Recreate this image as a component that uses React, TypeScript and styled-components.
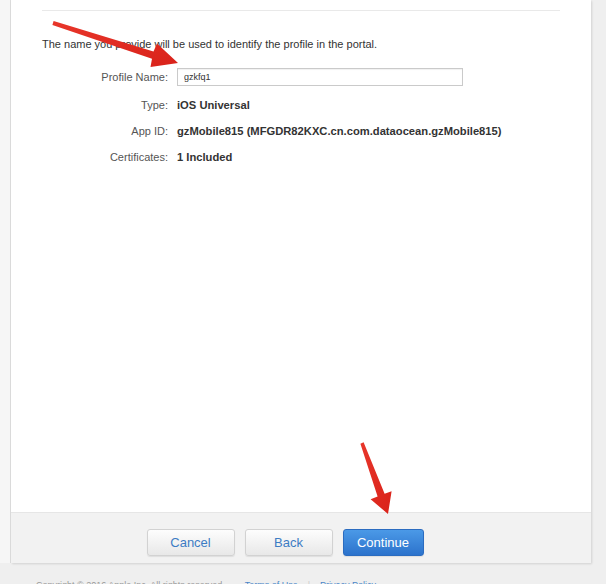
import React from 'react'
import styled, { createGlobalStyle } from 'styled-components'

const GlobalStyle = createGlobalStyle`
    html, body {
        margin: 0;
        padding: 0;
        background-color: #efefef;
        font-family: 'Liberation Sans', Arial, Helvetica, sans-serif;
        overflow: hidden;
    }
`
const PageStyled = styled.div`
    position: relative;
    width: 606px;
    height: 584px;
    overflow: hidden;
    background-color: #efefef;
`
const MainRowStyled = styled.div`
    display: flex;
    height: 563px;
`
const SidebarEdgeStyled = styled.div`
    width: 10px;
    background-color: #f6f6f6;
    border-right: 1px solid #dcdcdc;
`
const PanelStyled = styled.div`
    width: 580px;
    display: flex;
    flex-direction: column;
    background-color: #fff;
    box-shadow: 1px 1px 2px rgba(0, 0, 0, 0.12);
`
const PanelContentStyled = styled.div`
    flex: 1;
    padding: 10px 31px 0 31px;
    color: #333;
    font-size: 11px;
`
const DividerStyled = styled.div`
    height: 1px;
    background-color: #e9e9e9;
`
const IntroStyled = styled.p`
    margin: 26px 0 0 0;
    line-height: 14px;
`
const FormGridStyled = styled.div`
    display: grid;
    grid-template-columns: 126px 1fr;
    grid-template-rows: 28px 27px 26px 26px;
    column-gap: 9px;
    align-items: center;
    margin-top: 12px;
`
const LabelStyled = styled.div`
    text-align: right;
    color: #555;
`
const ValueStyled = styled.div`
    font-weight: bold;
    font-size: 11.2px;
    color: #333;
`
const InputStyled = styled.input`
    box-sizing: border-box;
    width: 286px;
    height: 18px;
    padding: 0 6px;
    border: 1px solid #cacaca;
    box-shadow: inset 0 1px 1px rgba(0, 0, 0, 0.06);
    font-family: inherit;
    font-size: 9px;
    color: #333;
    outline: none;
`
const ButtonBarStyled = styled.div`
    height: 51px;
    display: flex;
    justify-content: center;
    align-items: flex-start;
    gap: 10px;
    padding: 16px 32px 0 0;
    box-sizing: border-box;
    background-color: #f2f2f2;
    border-top: 1px solid #e6e6e6;
`
const ButtonStyled = styled.button<{ $primary?: boolean; $width: number }>`
    width: ${(p) => p.$width}px;
    height: 27px;
    border-radius: 3px;
    font-family: inherit;
    font-size: 13px;
    cursor: pointer;
    color: ${(p) => (p.$primary ? '#fff' : '#3d7cc4')};
    border: 1px solid ${(p) => (p.$primary ? '#2b6cc0' : '#d2d2d2')};
    background: ${(p) =>
        p.$primary ? 'linear-gradient(#4b99e7, #2c73cc)' : 'linear-gradient(#fdfdfd, #e8e8e8)'};
    box-shadow: 0 1px 1px rgba(0, 0, 0, 0.08);
`
const FooterStyled = styled.div`
    padding: 17px 0 0 36px;
    font-size: 9px;
    line-height: 11px;
    color: #999;
    white-space: nowrap;
`
const FooterLinkStyled = styled.span`
    color: #4a86c8;
`
const FooterSeparatorStyled = styled.span`
    color: #ccc;
    margin: 0 10px;
`
const ArrowLayerStyled = styled.svg`
    position: absolute;
    left: 0;
    top: 0;
    pointer-events: none;
`

const rows = [
    { label: 'Type:', value: 'iOS Universal' },
    { label: 'App ID:', value: 'gzMobile815 (MFGDR82KXC.cn.com.dataocean.gzMobile815)' },
    { label: 'Certificates:', value: '1 Included' },
]

const App = () => {
    return (
        <PageStyled>
            <GlobalStyle />
            <MainRowStyled>
                <SidebarEdgeStyled />
                <PanelStyled>
                    <PanelContentStyled>
                        <DividerStyled />
                        <IntroStyled>The name you provide will be used to identify the profile in the portal.</IntroStyled>
                        <FormGridStyled>
                            <LabelStyled>Profile Name:</LabelStyled>
                            <div>
                                <InputStyled defaultValue="gzkfq1" />
                            </div>
                            {rows.map((row) => (
                                <React.Fragment key={row.label}>
                                    <LabelStyled>{row.label}</LabelStyled>
                                    <ValueStyled>{row.value}</ValueStyled>
                                </React.Fragment>
                            ))}
                        </FormGridStyled>
                    </PanelContentStyled>
                    <ButtonBarStyled>
                        <ButtonStyled $width={88}>Cancel</ButtonStyled>
                        <ButtonStyled $width={88}>Back</ButtonStyled>
                        <ButtonStyled $width={81} $primary>
                            Continue
                        </ButtonStyled>
                    </ButtonBarStyled>
                </PanelStyled>
            </MainRowStyled>
            <FooterStyled>
                Copyright © 2016 Apple Inc. All rights reserved.
                <FooterSeparatorStyled />
                <FooterLinkStyled>Terms of Use</FooterLinkStyled>
                <FooterSeparatorStyled>|</FooterSeparatorStyled>
                <FooterLinkStyled>Privacy Policy</FooterLinkStyled>
            </FooterStyled>

            <ArrowLayerStyled width={606} height={584} viewBox="0 0 606 584">
                <defs>
                    <linearGradient id="arrowRed" x1="0" y1="0" x2="1" y2="1">
                        <stop offset="0" stopColor="#e8362a" />
                        <stop offset="1" stopColor="#d9221a" />
                    </linearGradient>
                </defs>
                <polygon
                    fill="url(#arrowRed)"
                    points="53.6,21.1 153.5,51.5 157,43.5 178,63 150.5,67 152,58.8 52.4,24.9"
                />
                <polygon
                    fill="url(#arrowRed)"
                    points="363.6,442.2 384.6,493.8 391.6,491.2 388,514 370.6,499.2 377.6,496.6 360.4,443.8"
                />
            </ArrowLayerStyled>
        </PageStyled>
    )
}

export default App
